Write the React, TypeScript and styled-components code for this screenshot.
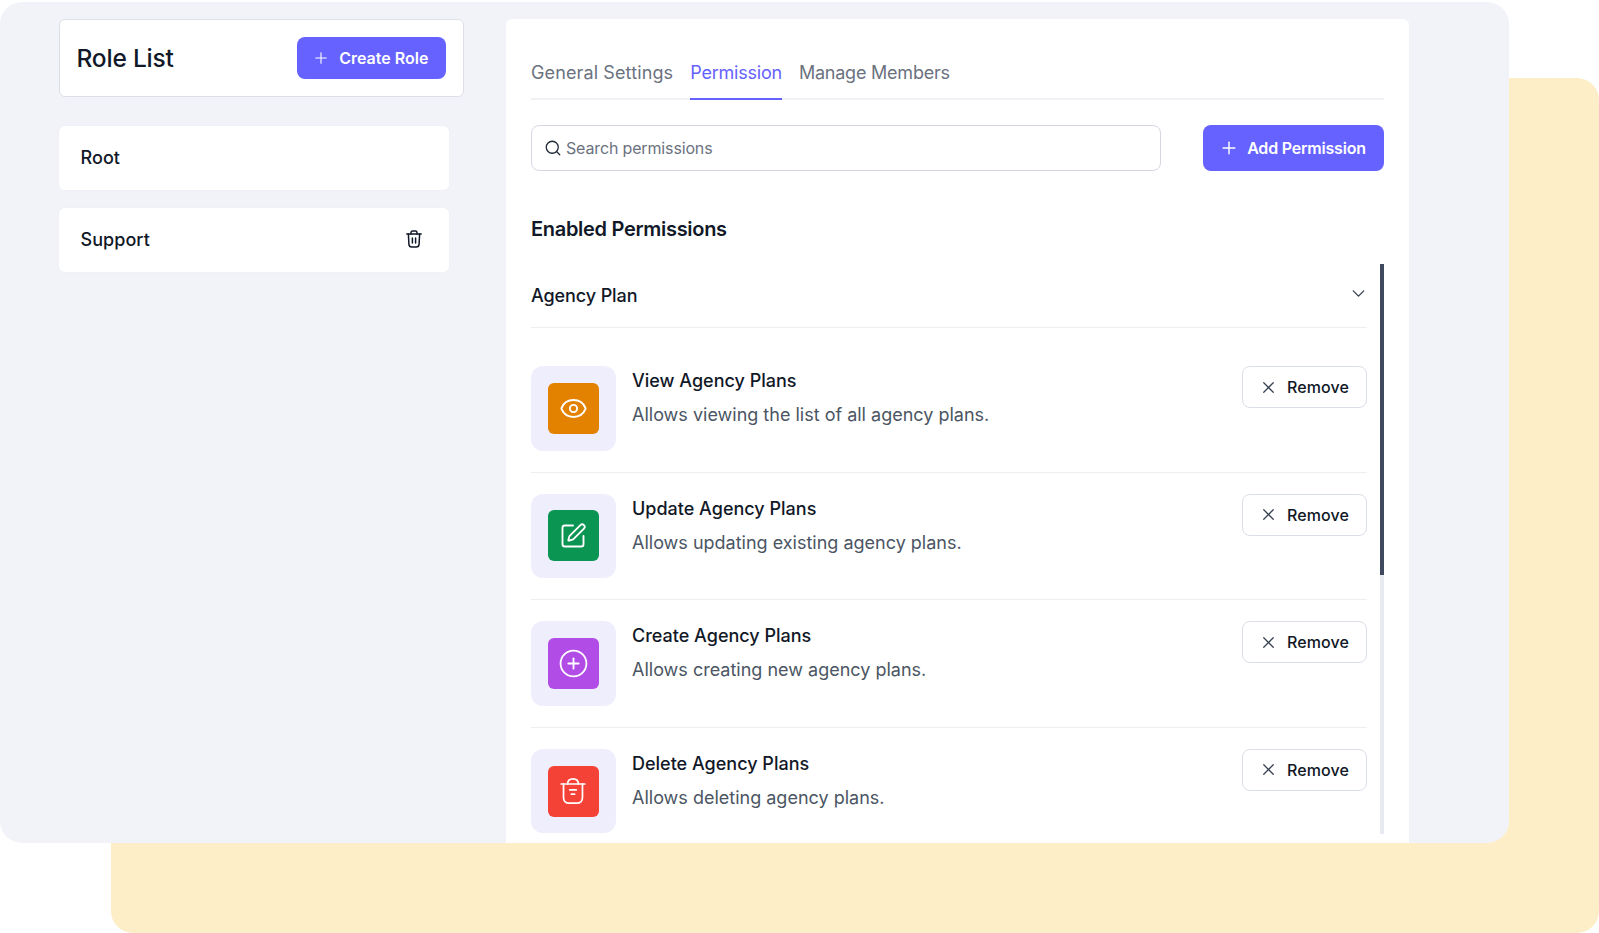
import styled, { createGlobalStyle } from "styled-components";
import { ChevronDown, CirclePlus, Eye, Plus, Search, SquarePen, X } from "lucide-react";

const GlobalStyle = createGlobalStyle`
    html, body {
        margin: 0;
        padding: 0;
        background: #ffffff;
    }
    * {
        box-sizing: border-box;
    }
    body {
        font-family: Inter, "Noto Sans", sans-serif;
        color: #111827;
        overflow: hidden;
    }
`;

const Stage = styled.div`
    position: relative;
    width: 1599px;
    height: 933px;
    padding-top: 2px;
    overflow: hidden;
`;

const Backdrop = styled.div`
    position: absolute;
    left: 111px;
    top: 78px;
    right: 0;
    bottom: 0;
    background: #feeec8;
    border-radius: 22px;
`;

const Panel = styled.div`
    position: relative;
    width: 1509px;
    height: 841px;
    padding: 17px 100px 0 59px;
    background: #f1f3f8;
    border-radius: 22px;
    overflow: hidden;
    display: flex;
    align-items: flex-start;
`;

const Sidebar = styled.aside`
    width: 405px;
    flex: none;
    margin-right: 42px;
`;

const SidebarHead = styled.div`
    height: 78px;
    padding: 0 17px 0 16.5px;
    background: #fff;
    border: 1.5px solid #dcdfe6;
    border-radius: 6px;
    display: flex;
    align-items: center;
    justify-content: space-between;
    margin-bottom: 29px;
`;

const HeadTitle = styled.h2`
    margin: 0;
    font-size: 24.5px;
    font-weight: 500;
    letter-spacing: -0.2px;
    color: #111827;
`;

const PrimaryButton = styled.button<{ $wide?: boolean }>`
    height: ${(p) => (p.$wide ? "46px" : "42px")};
    width: ${(p) => (p.$wide ? "181px" : "149.5px")};
    flex: none;
    border: none;
    border-radius: 8px;
    background: #6562ff;
    color: #fff;
    font-family: inherit;
    font-size: 16px;
    font-weight: 600;
    letter-spacing: ${(p) => (p.$wide ? "-0.2px" : "0")};
    display: flex;
    align-items: center;
    justify-content: center;
    gap: ${(p) => (p.$wide ? "8px" : "9px")};
    padding: 0 2px 0 0;
`;

const RoleCard = styled.div`
    width: 390px;
    height: 64px;
    padding: 0 25px 2px 21.5px;
    margin-bottom: 18px;
    background: #fff;
    border-radius: 6px;
    box-shadow: 0 0 0 1px #f0f1f6;
    display: flex;
    align-items: center;
    justify-content: space-between;
    font-size: 18px;
    font-weight: 500;
    letter-spacing: 0.05px;
    color: #111827;
`;

const TrashGlyph = ({ size = 20 }: { size?: number }) => (
    <svg width={size} height={size} viewBox="0 0 20 20" fill="none" stroke="currentColor" strokeWidth="1.5" strokeLinecap="round" strokeLinejoin="round">
        <path d="M2.8 5h14.4" />
        <path d="M7 5V3.6C7 2.7 7.7 2 8.6 2h2.8c.9 0 1.6.7 1.6 1.6V5" />
        <path d="M4.4 5l.5 10.2C5 16.8 6.2 18 7.8 18h4.4c1.6 0 2.8-1.2 2.9-2.8L15.6 5" />
        <path d="M8.4 9v5M11.6 9v5" />
    </svg>
);

const DeleteGlyph = () => (
    <svg width={28} height={28} viewBox="0 0 26 26" fill="none" stroke="currentColor" strokeWidth="1.6" strokeLinecap="round" strokeLinejoin="round">
        <path d="M2 6.5h22" />
        <path d="M8 6.5C8 3.5 10 1.7 13 1.7s5 1.8 5 4.8" />
        <path d="M4.2 6.5v12.2c0 3.4 2 5.6 5.4 5.6h6.8c3.4 0 5.4-2.2 5.4-5.6V6.5" />
        <path d="M10 12h6M11.5 16h3" />
    </svg>
);

const Content = styled.section`
    width: 903px;
    height: 900px;
    flex: none;
    padding: 0 25px;
    background: #fff;
    border-radius: 6px;
`;

const Tabs = styled.nav`
    height: 81px;
    display: flex;
    gap: 17px;
    align-items: flex-end;
    border-bottom: 2px solid #f0f1f5;
`;

const Tab = styled.div<{ $active?: boolean }>`
    height: 44px;
    margin-bottom: -2px;
    font-size: 18px;
    letter-spacing: -0.22px;
    line-height: 26px;
    padding-top: 4px;
    color: ${(p) => (p.$active ? "#6562ff" : "#6b7280")};
    border-bottom: 2px solid ${(p) => (p.$active ? "#6562ff" : "transparent")};

    &:first-child {
        letter-spacing: 0.12px;
    }
`;

const SearchRow = styled.div`
    margin-top: 25px;
    display: flex;
    justify-content: space-between;
`;

const SearchBox = styled.div`
    width: 630px;
    height: 46px;
    padding: 0 14px 0 12px;
    border: 1.5px solid #d5d8e2;
    border-radius: 8px;
    display: flex;
    align-items: center;
    gap: 4px;
    color: #1f2937;
`;

const SearchInput = styled.input`
    flex: 1;
    border: none;
    outline: none;
    padding: 0;
    font-family: inherit;
    font-size: 16px;
    letter-spacing: -0.15px;
    color: #1f2937;

    &::placeholder {
        color: #6b7280;
        opacity: 1;
    }
`;

const SectionTitle = styled.h3`
    margin: 46px 0 0;
    font-size: 20px;
    line-height: 24px;
    font-weight: 600;
    letter-spacing: -0.3px;
    color: #111827;
`;

const ScrollArea = styled.div`
    position: relative;
    margin-top: 23px;
    height: 570px;
    padding-right: 17px;
`;

const ScrollTrack = styled.div`
    position: absolute;
    top: 0;
    right: 0;
    width: 4px;
    height: 100%;
    background: #e9eaf1;
`;

const ScrollThumb = styled.div`
    height: 311px;
    background: #3f4a5f;
`;

const GroupHead = styled.div`
    height: 64px;
    display: flex;
    align-items: center;
    justify-content: space-between;
    border-bottom: 1px solid #eceef2;
    font-size: 18px;
    font-weight: 500;
    letter-spacing: -0.1px;
    color: #111827;
    margin-bottom: 17px;

    svg {
        margin: -5px -2px 0 0;
    }
`;

const Row = styled.div`
    padding: 21.05px 0;
    display: flex;
    align-items: flex-start;
    border-bottom: 1px solid #eceef2;

    &:last-child {
        border-bottom: none;
    }
`;

const IconWrap = styled.div`
    width: 84.5px;
    height: 84.5px;
    flex: none;
    border-radius: 12px;
    background: #efeefd;
    display: flex;
    align-items: center;
    justify-content: center;
`;

const IconTile = styled.div<{ $color: string }>`
    width: 51px;
    height: 51px;
    border-radius: 6px;
    background: ${(p) => p.$color};
    color: #fff;
    display: flex;
    align-items: center;
    justify-content: center;
`;

const RowText = styled.div`
    flex: 1;
    margin-left: 16.5px;
    padding-top: 3px;
`;

const RowTitle = styled.div`
    font-size: 18px;
    line-height: 24px;
    font-weight: 500;
    color: #111827;
`;

const RowDesc = styled.div`
    margin-top: 10px;
    font-size: 18px;
    line-height: 24px;
    color: #4b5563;
`;

const RemoveButton = styled.button`
    width: 125px;
    height: 42px;
    flex: none;
    border: 1.5px solid #dadee6;
    border-radius: 8px;
    background: #fff;
    color: #111827;
    font-family: inherit;
    font-size: 16px;
    font-weight: 500;
    letter-spacing: 0.1px;
    display: flex;
    align-items: center;
    justify-content: center;
    gap: 9px;
    padding: 0 1px 0 0;

    svg {
        color: #374151;
    }
`;

const permissions = [
    { title: "View Agency Plans", desc: "Allows viewing the list of all agency plans.", color: "#e38100", icon: <Eye size={29} strokeWidth={1.6} /> },
    { title: "Update Agency Plans", desc: "Allows updating existing agency plans.", color: "#0b9552", icon: <SquarePen size={28} strokeWidth={1.6} /> },
    { title: "Create Agency Plans", desc: "Allows creating new agency plans.", color: "#b14de6", icon: <CirclePlus size={31} strokeWidth={1.4} /> },
    { title: "Delete Agency Plans", desc: "Allows deleting agency plans.", color: "#f44336", icon: <DeleteGlyph /> },
];

function App() {
    return (
        <Stage>
            <GlobalStyle />
            <Backdrop />
            <Panel>
                <Sidebar>
                    <SidebarHead>
                        <HeadTitle>Role List</HeadTitle>
                        <PrimaryButton>
                            <Plus size={18} strokeWidth={1.5} />
                            Create Role
                        </PrimaryButton>
                    </SidebarHead>
                    <RoleCard>Root</RoleCard>
                    <RoleCard>
                        Support
                        <TrashGlyph />
                    </RoleCard>
                </Sidebar>
                <Content>
                    <Tabs>
                        <Tab>General Settings</Tab>
                        <Tab $active>Permission</Tab>
                        <Tab>Manage Members</Tab>
                    </Tabs>
                    <SearchRow>
                        <SearchBox>
                            <Search size={18} strokeWidth={1.7} />
                            <SearchInput placeholder="Search permissions" readOnly />
                        </SearchBox>
                        <PrimaryButton $wide>
                            <Plus size={20} strokeWidth={1.7} />
                            Add Permission
                        </PrimaryButton>
                    </SearchRow>
                    <SectionTitle>Enabled Permissions</SectionTitle>
                    <ScrollArea>
                        <ScrollTrack>
                            <ScrollThumb />
                        </ScrollTrack>
                        <GroupHead>
                            Agency Plan
                            <ChevronDown size={21} strokeWidth={1.6} color="#374151" />
                        </GroupHead>
                        {permissions.map((item) => (
                            <Row key={item.title}>
                                <IconWrap>
                                    <IconTile $color={item.color}>{item.icon}</IconTile>
                                </IconWrap>
                                <RowText>
                                    <RowTitle>{item.title}</RowTitle>
                                    <RowDesc>{item.desc}</RowDesc>
                                </RowText>
                                <RemoveButton>
                                    <X size={19} strokeWidth={1.6} />
                                    Remove
                                </RemoveButton>
                            </Row>
                        ))}
                    </ScrollArea>
                </Content>
            </Panel>
        </Stage>
    );
}

export default App;
